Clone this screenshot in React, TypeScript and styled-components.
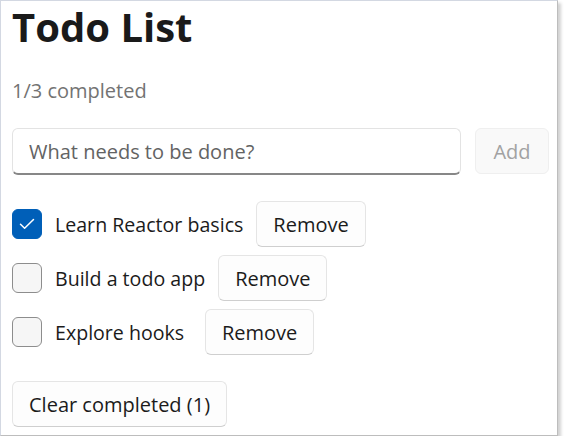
import React, { useState } from 'react';
import styled, { createGlobalStyle } from 'styled-components';

const GlobalStyle = createGlobalStyle`
  html, body {
    margin: 0;
    padding: 0;
    background: #ffffff;
  }
  body {
    font-family: 'Open Sans', 'Noto Sans', sans-serif;
    color: #1b1b1b;
  }
`;

const Window = styled.div`
  box-sizing: border-box;
  width: 558px;
  height: 436px;
  background: #ffffff;
  border-left: 1px solid #d3d8e2;
  border-top: 1px solid #d3d8e2;
  border-right: 1px solid #bdbdbd;
  border-bottom: 1px solid #bdbdbd;
  box-shadow: 3px 3px 3px rgba(0, 0, 0, 0.18);
  padding: 0 8px 0 11px;
  display: flex;
  flex-direction: column;
`;

const Title = styled.h1`
  margin: 5px 0 0;
  font-size: 40px;
  line-height: 42px;
  font-weight: 700;
  color: #1a1a1a;
`;

const Counter = styled.div`
  margin-top: 29px;
  font-size: 20px;
  line-height: 28px;
  color: #737373;
`;

const InputRow = styled.div`
  display: flex;
  gap: 14px;
  margin-top: 23px;
`;

const TextInput = styled.input`
  flex: 1;
  min-width: 0;
  box-sizing: border-box;
  height: 47px;
  padding: 0 16px;
  font-family: inherit;
  font-size: 20px;
  color: #1b1b1b;
  background: #ffffff;
  border: 1px solid #e3e3e3;
  border-bottom: 2px solid #878787;
  border-radius: 6px;
  outline: none;

  &::placeholder {
    color: #636363;
  }
`;

const Button = styled.button<{ $disabled?: boolean }>`
  box-sizing: border-box;
  height: 46px;
  padding: 0 16px;
  font-family: inherit;
  font-size: 20px;
  color: ${(p) => (p.$disabled ? '#a2a2a2' : '#1b1b1b')};
  background: ${(p) => (p.$disabled ? '#f9f9f9' : '#fdfdfd')};
  border: 1px solid ${(p) => (p.$disabled ? '#efefef' : '#e5e5e5')};
  border-bottom-color: ${(p) => (p.$disabled ? '#efefef' : '#cfcfcf')};
  border-radius: 6px;
  white-space: nowrap;
  flex-shrink: 0;
`;

const AddButton = styled(Button)`
  min-width: 74px;
`;

const List = styled.div`
  display: flex;
  flex-direction: column;
  gap: 8px;
  margin-top: 26px;
`;

const Row = styled.div`
  display: flex;
  align-items: center;
  gap: 13px;
`;

const CheckLabel = styled.label`
  display: flex;
  align-items: center;
  gap: 13px;
  min-width: 180px;
  font-size: 19.6px;
  color: #1b1b1b;
  cursor: pointer;
`;

const Box = styled.span<{ $checked: boolean }>`
  box-sizing: border-box;
  width: 30px;
  height: 30px;
  flex-shrink: 0;
  border-radius: 6px;
  display: flex;
  align-items: center;
  justify-content: center;
  background: ${(p) => (p.$checked ? '#005fb8' : '#f6f6f6')};
  border: 1px solid ${(p) => (p.$checked ? '#005fb8' : '#8d8d8d')};
`;

const Footer = styled.div`
  margin-top: 26px;
`;

type Todo = { id: number; text: string; done: boolean };

export default function App() {
  const [todos, setTodos] = useState<Todo[]>([
    { id: 1, text: 'Learn Reactor basics', done: true },
    { id: 2, text: 'Build a todo app', done: false },
    { id: 3, text: 'Explore hooks', done: false },
  ]);
  const [draft, setDraft] = useState('');

  const doneCount = todos.filter((t) => t.done).length;

  const toggle = (id: number) =>
    setTodos(todos.map((x) => (x.id === id ? { ...x, done: !x.done } : x)));

  return (
    <>
      <GlobalStyle />
      <Window>
        <Title>Todo List</Title>
        <Counter>
          {doneCount}/{todos.length} completed
        </Counter>
        <InputRow>
          <TextInput
            placeholder="What needs to be done?"
            value={draft}
            onChange={(e) => setDraft(e.target.value)}
          />
          <AddButton $disabled={!draft.trim()}>Add</AddButton>
        </InputRow>
        <List>
          {todos.map((t) => (
            <Row key={t.id}>
              <CheckLabel onClick={() => toggle(t.id)}>
                <Box $checked={t.done}>
                  {t.done && (
                    <svg width="16" height="12" viewBox="0 0 16 12">
                      <path
                        d="M1.5 6.2 L5.6 10.2 L14.5 1.5"
                        fill="none"
                        stroke="#ffffff"
                        strokeWidth="1.5"
                        strokeLinecap="round"
                        strokeLinejoin="round"
                      />
                    </svg>
                  )}
                </Box>
                {t.text}
              </CheckLabel>
              <Button onClick={() => setTodos(todos.filter((x) => x.id !== t.id))}>Remove</Button>
            </Row>
          ))}
        </List>
        <Footer>
          <Button onClick={() => setTodos(todos.filter((x) => !x.done))}>
            Clear completed ({doneCount})
          </Button>
        </Footer>
      </Window>
    </>
  );
}
